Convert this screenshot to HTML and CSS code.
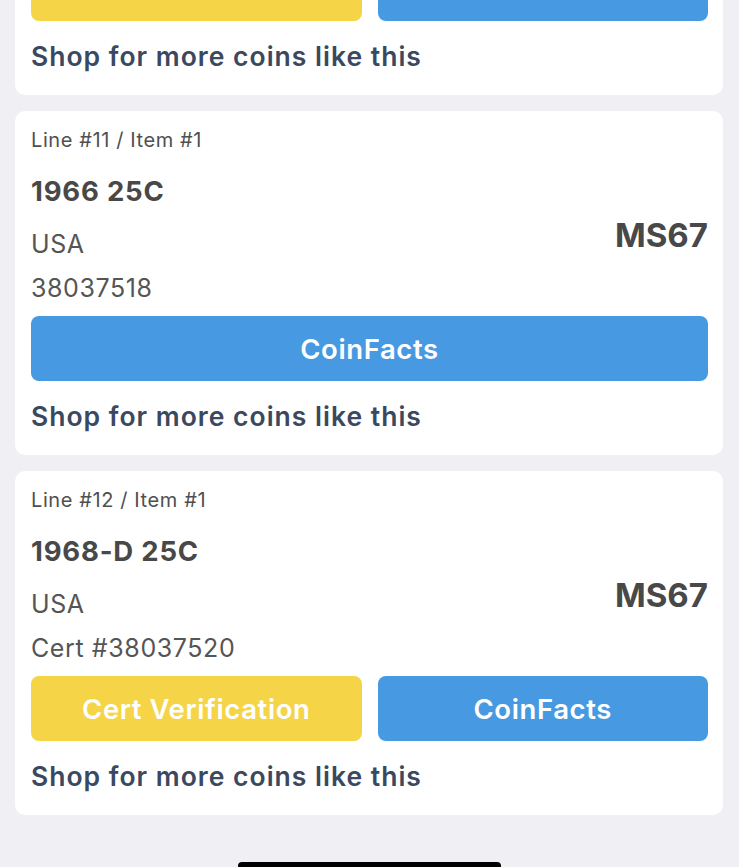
FILE: index.html
```html
<!DOCTYPE html>
<html lang="en">
<head>
    <meta charset="UTF-8">
    <meta name="viewport" content="width=device-width, initial-scale=1.0">
    <title>Order Items</title>
    <link rel="stylesheet" href="styles.css">
</head>
<body>
    <div class="item-list">
        <!-- Line #10 (scrolled mostly out of view) -->
        <div class="item-card">
            <div class="item-line">Line #10 / Item #1</div>
            <div class="item-body">
                <div class="item-info">
                    <div class="item-title">1965 25C</div>
                    <div class="item-country">USA</div>
                    <div class="item-cert">Cert #38037516</div>
                </div>
                <div class="item-grade">MS67</div>
            </div>
            <div class="item-buttons">
                <button class="btn btn-cert">Cert Verification</button>
                <button class="btn btn-facts">CoinFacts</button>
            </div>
            <a class="shop-link" href="#">Shop for more coins like this</a>
        </div>

        <!-- Line #11 -->
        <div class="item-card">
            <div class="item-line">Line #11 / Item #1</div>
            <div class="item-body">
                <div class="item-info">
                    <div class="item-title">1966 25C</div>
                    <div class="item-country">USA</div>
                    <div class="item-cert">38037518</div>
                </div>
                <div class="item-grade">MS67</div>
            </div>
            <div class="item-buttons">
                <button class="btn btn-facts">CoinFacts</button>
            </div>
            <a class="shop-link" href="#">Shop for more coins like this</a>
        </div>

        <!-- Line #12 -->
        <div class="item-card">
            <div class="item-line">Line #12 / Item #1</div>
            <div class="item-body">
                <div class="item-info">
                    <div class="item-title">1968-D 25C</div>
                    <div class="item-country">USA</div>
                    <div class="item-cert">Cert #38037520</div>
                </div>
                <div class="item-grade">MS67</div>
            </div>
            <div class="item-buttons">
                <button class="btn btn-cert">Cert Verification</button>
                <button class="btn btn-facts">CoinFacts</button>
            </div>
            <a class="shop-link" href="#">Shop for more coins like this</a>
        </div>
    </div>

    <div class="home-indicator"></div>
</body>
</html>
```

FILE: styles.css
```css
body {
    font-family: Inter, "Noto Sans", sans-serif;
    margin: 0;
    padding: 0;
    background-color: #efeff4;
    height: 867px;
    overflow: hidden;
}

/* list is scrolled: the first card sits mostly above the viewport */
.item-list {
    display: flex;
    flex-direction: column;
    gap: 16px;
    padding: 0 16px 0 15px;
    margin-top: -249px;
}

.item-card {
    background-color: white;
    border-radius: 10px;
    padding: 15px 15px 22px 16px;
    display: flex;
    flex-direction: column;
}

.item-line {
    font-size: 20px;
    line-height: 28px;
    letter-spacing: 0.6px;
    color: #4f4f4f;
}

.item-body {
    display: flex;
    justify-content: space-between;
    align-items: center;
    margin-top: 23px;
}

.item-title {
    font-size: 27.5px;
    font-weight: 700;
    line-height: 28px;
    letter-spacing: 0.8px;
    color: #484848;
}

.item-country {
    font-size: 25px;
    line-height: 30px;
    letter-spacing: 0.6px;
    color: #555;
    margin-top: 24px;
}

.item-cert {
    font-size: 25px;
    line-height: 30px;
    letter-spacing: 0.6px;
    color: #555;
    margin-top: 14px;
}

.item-grade {
    font-size: 33px;
    font-weight: 700;
    color: #484848;
    padding-bottom: 10px;
}

.item-buttons {
    display: flex;
    gap: 16px;
    margin-top: 13px;
}

.btn {
    flex: 1;
    height: 65px;
    border: none;
    border-radius: 8px;
    color: white;
    font-family: inherit;
    font-size: 27.5px;
    font-weight: 600;
    letter-spacing: 0.6px;
    cursor: pointer;
}

.btn-cert {
    background-color: #f6d447;
}

.btn-facts {
    background-color: #479ae1;
}

.shop-link {
    margin-top: 18px;
    font-size: 26.5px;
    font-weight: 600;
    line-height: 34px;
    letter-spacing: 1px;
    color: #3a4860;
    text-decoration: none;
}

.home-indicator {
    position: fixed;
    bottom: -3px;
    left: 238px;
    width: 263px;
    height: 8px;
    border-radius: 4px;
    background-color: #000;
}
```
